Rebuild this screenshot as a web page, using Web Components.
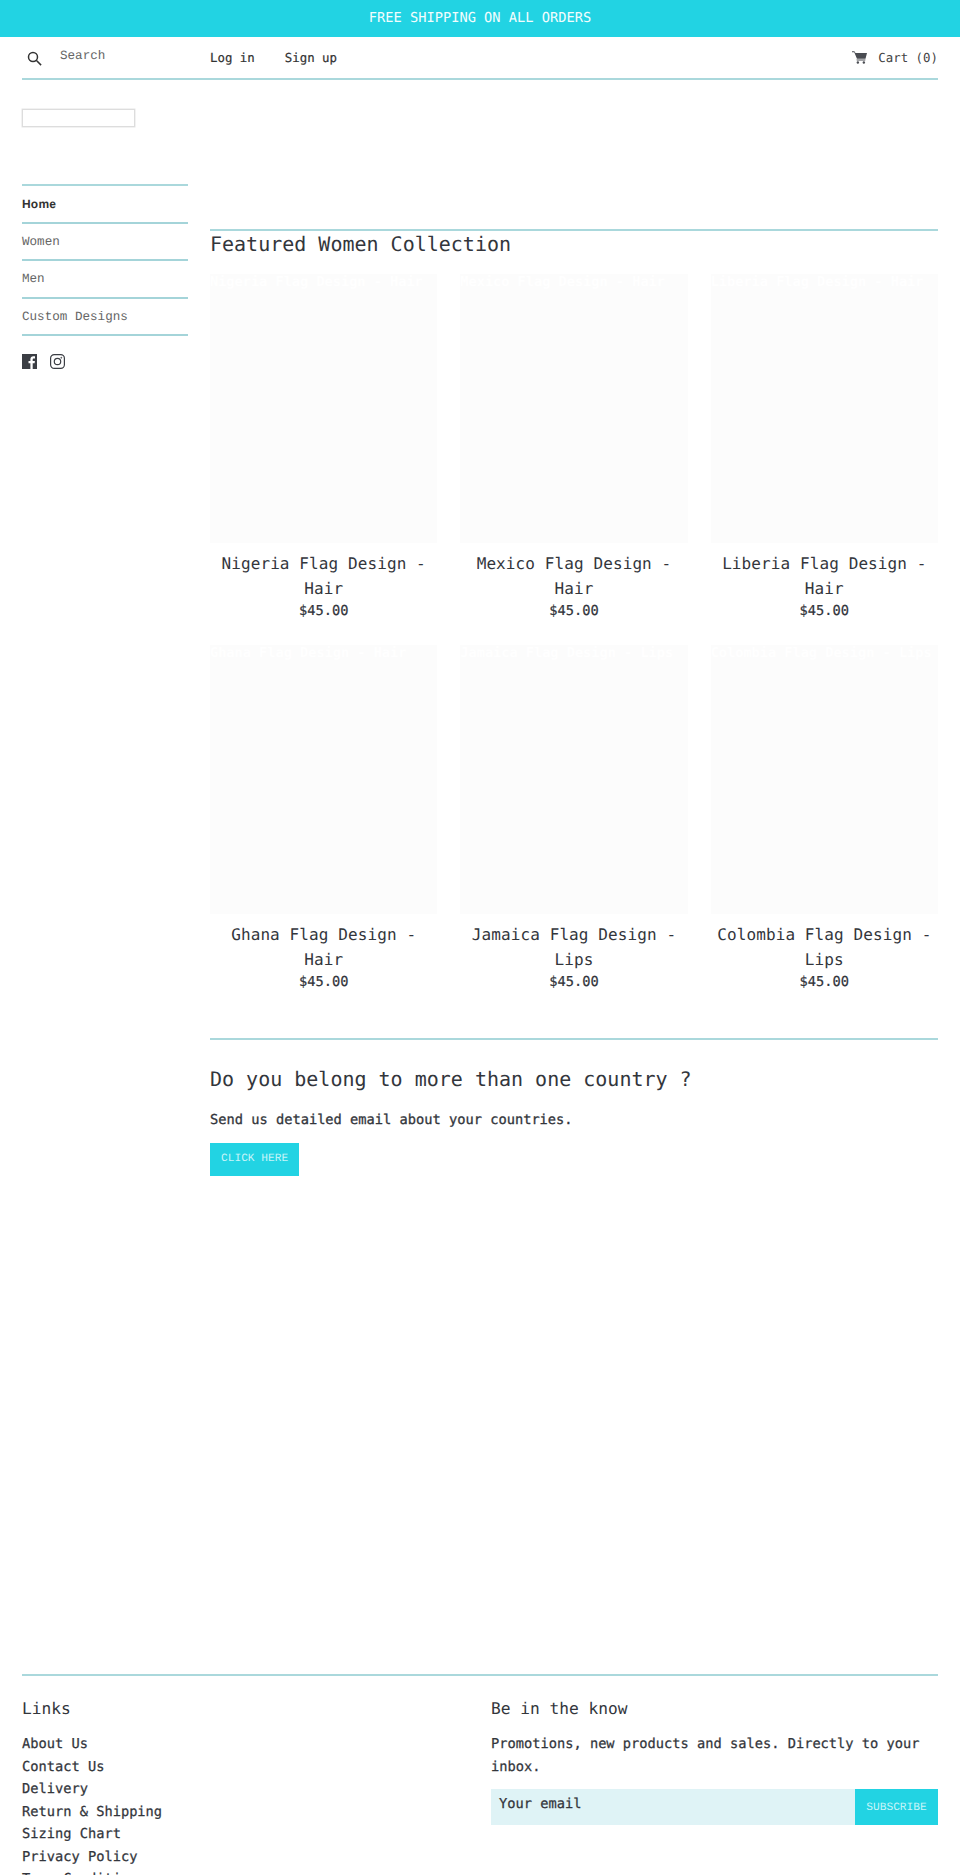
<!DOCTYPE html>
<html>
<head>
<meta charset="utf-8">
<style>
  html, body { margin: 0; padding: 0; height: 1875px; overflow: hidden; background: #fff; }
  body { font-family: "DejaVu Sans Mono", monospace; color: #2f3238; text-rendering: geometricPrecision; }
</style>
</head>
<body>
<template id="announcement-tpl">
  <style>
    :host { display: block; background: #22d3e3; color: #f2fdfe; text-align: center; height: 37px; line-height: 37px; font-size: 13.7px; }
  </style>
  <slot></slot>
</template>

<template id="top-bar-tpl">
  <style>
    :host { display: block; margin: 0 22px; height: 41px; border-bottom: 2px solid #aad8dc; font-size: 12.4px; color: #333; }
    .row { display: flex; align-items: center; height: 41px; }
    .search { display: flex; align-items: center; width: 188px; flex-shrink: 0; }
    .search svg { width: 15px; height: 15px; margin: 2px 0 0 5px; fill: none; stroke: #333; stroke-width: 2; }
    .search span { font-family: "Liberation Mono", monospace; font-size: 12.6px; color: #666; margin: -4px 0 0 18px; }
    .links { display: flex; gap: 30px; flex: 1; -webkit-text-stroke: 0.2px; }
    .cart { display: flex; align-items: center; gap: 11px; color: #444; }
    .cart svg { width: 15px; height: 13px; fill: #4a4c52; }
  </style>
  <div class="row">
    <div class="search">
      <svg viewBox="0 0 20 20"><circle cx="8" cy="8" r="6"/><path d="M12.300 12.300l6.500 6.500"/></svg>
      <span>Search</span>
    </div>
    <div class="links"><span>Log in</span><span>Sign up</span></div>
    <div class="cart">
      <svg viewBox="0 0 20 17"><path d="M0 0h2.600c.7 0 1.200.4 1.400 1l.5 1.600H20l-2 7.600H6.600L3 1.600H0z"/><path d="M6 11.200h12l-.4 1.400H6.400z"/><circle cx="7.800" cy="15.200" r="1.600"/><circle cx="15.800" cy="15.200" r="1.600"/></svg>
      <span>Cart (0)</span>
    </div>
  </div>
</template>

<template id="side-nav-tpl">
  <style>
    :host { display: block; width: 166px; flex-shrink: 0; }
    .logo { width: 111px; height: 16px; border: 1px solid #ddd; box-shadow: 0 0 0 0.5px #e4e4e4; margin: 29px 0 57px; }
    ul { list-style: none; margin: 0; padding: 0; border-top: 2px solid #aad8dc; }
    li { height: 35.5px; line-height: 37px; border-bottom: 2px solid #a4d4d9; font-family: "Liberation Mono", monospace; font-size: 12.6px; color: #666; }
    li.on { font-family: "Liberation Sans", sans-serif; font-weight: 700; font-size: 12px; letter-spacing: 0.2px; color: #333; }
    .social { display: flex; gap: 13px; margin-top: 18px; }
    .social svg { width: 15px; height: 15px; display: block; }
  </style>
  <div class="logo"></div>
  <ul>
    <li class="on">Home</li>
    <li>Women</li>
    <li>Men</li>
    <li>Custom Designs</li>
  </ul>
  <div class="social">
    <svg viewBox="0 0 15 15"><path fill="#3b3e44" d="M0 0h15v15h-4.300V9.200h1.900l.3-2.300h-2.200V5.500c0-.7.2-1.100 1.100-1.100h1.200V2.300c-.2 0-.9-.1-1.700-.1-1.700 0-2.900 1-2.900 3v1.700H6.500v2.300h1.900V15H0z"/></svg>
    <svg viewBox="0 0 15 15" fill="none" stroke="#3b3e44" stroke-width="1.200"><rect x=".6" y=".6" width="13.800" height="13.800" rx="3.600"/><circle cx="7.500" cy="7.500" r="3.200"/><circle cx="11.300" cy="3.700" r=".5" fill="#3b3e44" stroke-width=".6"/></svg>
  </div>
</template>

<template id="product-card-tpl">
  <style>
    :host { display: block; text-align: center; min-width: 0; }
    .img { height: 269px; background: #fcfcfc; overflow: hidden; color: #fff; font-size: 13.6px; font-weight: 700; line-height: 16px; white-space: nowrap; text-align: left; }
    .title { font-size: 16px; letter-spacing: 0.1px; line-height: 25px; margin-top: 8px; color: #33363c; }
    .price { font-size: 13.7px; line-height: 20px; color: #33363c; -webkit-text-stroke: 0.2px; }
  </style>
  <div class="img"></div>
  <div class="title"></div>
  <div class="price">$45.00</div>
</template>

<template id="collection-grid-tpl">
  <style>
    :host { display: block; border-top: 2px solid #aad8dc; }
    h2 { font-size: 20px; font-weight: 400; line-height: 28px; margin: -1px 0 16px; color: #33363c; }
    .grid { display: grid; grid-template-columns: repeat(3, minmax(0, 1fr)); column-gap: 23px; row-gap: 24px; }
  </style>
  <h2>Featured Women Collection</h2>
  <div class="grid"><slot></slot></div>
</template>

<template id="rich-text-tpl">
  <style>
    :host { display: block; border-top: 2px solid #aad8dc; margin-top: 46px; }
    h2 { font-size: 20px; font-weight: 400; line-height: 28px; margin: 25px 0 16px; color: #33363c; }
    p { font-size: 13.7px; line-height: 22px; margin: 0 0 12px; color: #33363c; -webkit-text-stroke: 0.3px; }
    a { display: block; width: fit-content; background: #22d3e3; color: #c8f5f9; font-family: "Liberation Mono", monospace; font-size: 11.200px; line-height: 33px; padding: 0 11px; }
  </style>
  <h2>Do you belong to more than one country ?</h2>
  <p>Send us detailed email about your countries.</p>
  <a>CLICK HERE</a>
</template>

<template id="site-footer-tpl">
  <style>
    :host { display: block; margin: 0 22px; border-top: 2px solid #aad8dc; color: #33363c; }
    .cols { display: grid; grid-template-columns: 469px 1fr; padding-top: 21px; }
    h3 { font-size: 16.200px; font-weight: 400; line-height: 24px; margin: 0 0 12px; }
    ul { list-style: none; margin: 0; padding: 0; }
    li, p { font-size: 13.7px; line-height: 22.500px; margin: 0; -webkit-text-stroke: 0.25px; }
    form { display: flex; height: 36px; margin-top: 11px; }
    .input { flex: 1; background: #dff3f6; font-size: 13.7px; line-height: 30px; padding-left: 8px; -webkit-text-stroke: 0.25px; }
    .btn { width: 83px; background: #22d3e3; color: #c8f5f9; font-family: "Liberation Mono", monospace; font-size: 11.200px; line-height: 38px; text-align: center; }
  </style>
  <div class="cols">
    <div>
      <h3>Links</h3>
      <ul><li>About Us</li><li>Contact Us</li><li>Delivery</li><li>Return &amp; Shipping</li><li>Sizing Chart</li><li>Privacy Policy</li><li>Term Condition</li></ul>
    </div>
    <div>
      <h3>Be in the know</h3>
      <p>Promotions, new products and sales. Directly to your inbox.</p>
      <form><div class="input">Your email</div><div class="btn">SUBSCRIBE</div></form>
    </div>
  </div>
</template>

<template id="page-shell-tpl">
  <style>
    :host { display: flex; margin: 0 22px; gap: 22px; height: 1594px; }
    main { flex: 1; min-width: 0; padding-top: 149px; }
  </style>
  <slot name="side"></slot>
  <main><slot></slot></main>
</template>

<script>
  function simple(tag, tplId) {
    customElements.define(tag, class extends HTMLElement {
      connectedCallback() {
        if (this.shadowRoot) return;
        const root = this.attachShadow({ mode: 'open' });
        root.appendChild(document.getElementById(tplId).content.cloneNode(true));
      }
    });
  }
  simple('announcement-bar', 'announcement-tpl');
  simple('top-bar', 'top-bar-tpl');
  simple('side-nav', 'side-nav-tpl');
  simple('collection-grid', 'collection-grid-tpl');
  simple('rich-text', 'rich-text-tpl');
  simple('site-footer', 'site-footer-tpl');
  simple('page-shell', 'page-shell-tpl');

  // the card shows its name twice: faintly on the placeholder and as the title
  customElements.define('product-card', class extends HTMLElement {
    connectedCallback() {
      if (this.shadowRoot) return;
      const root = this.attachShadow({ mode: 'open' });
      root.appendChild(document.getElementById('product-card-tpl').content.cloneNode(true));
      const name = this.getAttribute('name');
      root.querySelector('.img').textContent = name;
      root.querySelector('.title').textContent = name;
    }
  });
</script>

<announcement-bar>FREE SHIPPING ON ALL ORDERS</announcement-bar>
<top-bar></top-bar>
<page-shell>
  <side-nav slot="side"></side-nav>
  <collection-grid>
    <product-card name="Nigeria Flag Design - Hair"></product-card>
    <product-card name="Mexico Flag Design - Hair"></product-card>
    <product-card name="Liberia Flag Design - Hair"></product-card>
    <product-card name="Ghana Flag Design - Hair"></product-card>
    <product-card name="Jamaica Flag Design - Lips"></product-card>
    <product-card name="Colombia Flag Design - Lips"></product-card>
  </collection-grid>
  <rich-text></rich-text>
</page-shell>
<site-footer></site-footer>
</body>
</html>
